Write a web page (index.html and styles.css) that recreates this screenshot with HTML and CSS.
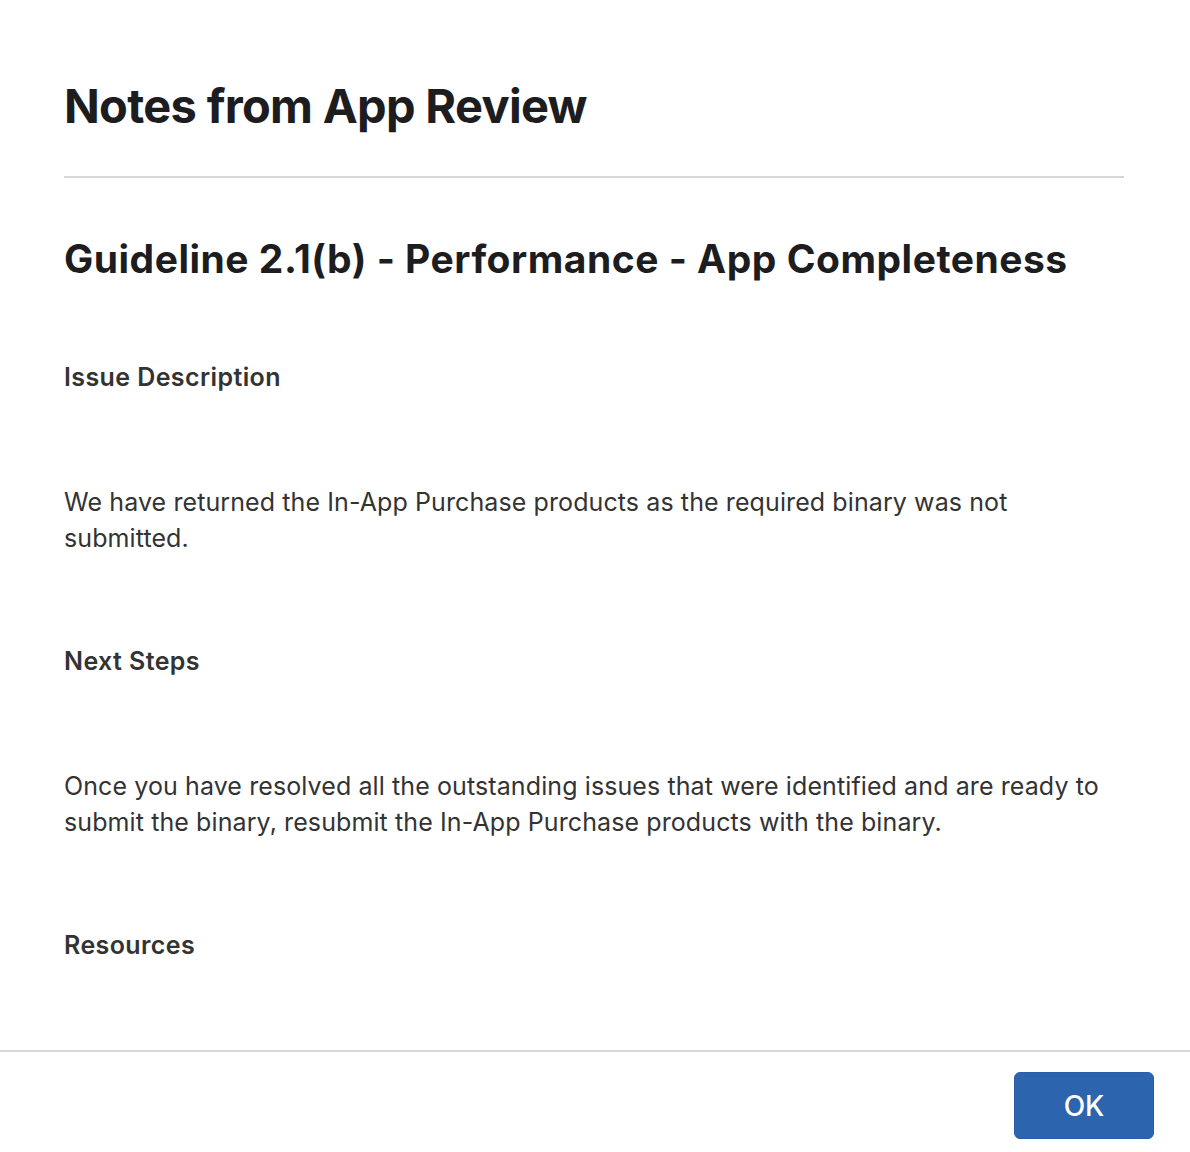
FILE: index.html
```html
<!DOCTYPE html>
<html lang="en">
<head>
<meta charset="utf-8">
<title>Notes from App Review</title>
<link rel="stylesheet" href="styles.css">
</head>
<body>
<div class="dialog">
  <div class="dialog-body">
    <h1 class="dialog-title">Notes from App Review</h1>
    <hr class="divider">
    <h2 class="guideline">Guideline 2.1(b) - Performance - App Completeness</h2>
    <h3 class="label">Issue Description</h3>
    <p class="text">We have returned the In-App Purchase products as the required binary was not submitted.</p>
    <h3 class="label">Next Steps</h3>
    <p class="text">Once you have resolved all the outstanding issues that were identified and are ready to submit the binary, resubmit the In-App Purchase products with the binary.</p>
    <h3 class="label">Resources</h3>
  </div>
  <div class="dialog-footer">
    <button class="btn-ok" type="button">OK</button>
  </div>
</div>
</body>
</html>
```

FILE: styles.css
```css
html, body {
  margin: 0;
  padding: 0;
  background: #ffffff;
}

body {
  font-family: Inter, "Noto Sans", "Liberation Sans", sans-serif;
  color: #333333;
}

.dialog {
  height: 100vh;
  display: flex;
  flex-direction: column;
}

.dialog-body {
  flex: 1;
  overflow: hidden;
  padding: 78px 66px 0 64px;
}

.dialog-title {
  margin: 0;
  font-size: 47px;
  line-height: 56px;
  font-weight: 700;
  color: #1d1d1f;
  letter-spacing: -0.7px;
}

.divider {
  margin: 42px 0 0;
  border: 0;
  height: 2px;
  background: #d6d6d6;
}

.guideline {
  margin: 58px 0 0;
  font-size: 39px;
  line-height: 46px;
  font-weight: 700;
  color: #1d1d1f;
  letter-spacing: 0.5px;
}

.label {
  margin: 80px 0 0;
  font-size: 25px;
  line-height: 30px;
  font-weight: 600;
  color: #333333;
  letter-spacing: 0.4px;
}

.text {
  margin: 92px 0 0;
  font-size: 25px;
  line-height: 36px;
  font-weight: 400;
  color: #333333;
  letter-spacing: 0.1px;
}

.text + .label {
  margin-top: 90px;
}

.dialog-footer {
  border-top: 2px solid #d6d6d6;
  display: flex;
  justify-content: flex-end;
  padding: 20px 36px 13px 0;
}

.btn-ok {
  width: 140px;
  height: 67px;
  border: 1px solid #2a5ea8;
  border-radius: 6px;
  background: #2c65ae;
  color: #ffffff;
  font-family: Inter, "Noto Sans", "Liberation Sans", sans-serif;
  font-size: 28px;
  font-weight: 500;
  cursor: pointer;
}
```
